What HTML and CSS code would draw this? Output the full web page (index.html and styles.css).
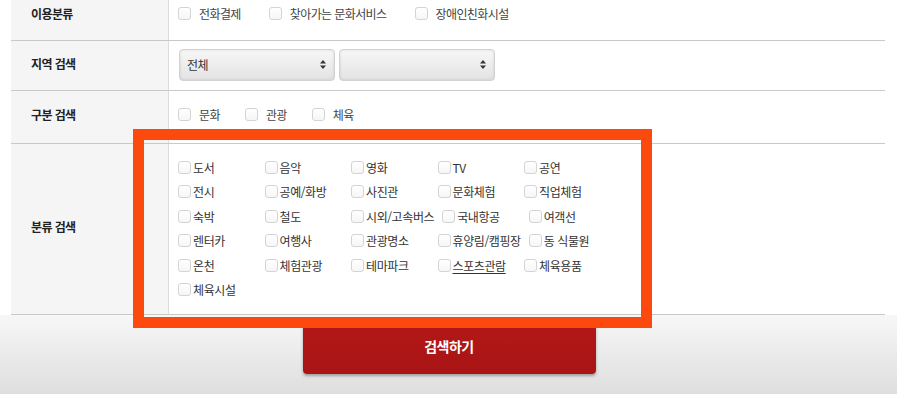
FILE: index.html
```html
<!DOCTYPE html>
<html lang="ko">
<head>
    <meta charset="UTF-8">
    <meta name="viewport" content="width=device-width, initial-scale=1.0">
    <title>상세 검색</title>
    <link rel="stylesheet" href="styles.css">
</head>
<body>
<div class="search-box">
    <table class="search-table">
        <tr class="row-use">
            <th>이용분류</th>
            <td>
                <div class="opt-list opt-wide">
                    <label class="opt"><input type="checkbox"> 전화결제</label>
                    <label class="opt"><input type="checkbox"> 찾아가는 문화서비스</label>
                    <label class="opt"><input type="checkbox"> 장애인친화시설</label>
                </div>
            </td>
        </tr>
        <tr class="row-area">
            <th>지역 검색</th>
            <td>
                <select class="sel">
                    <option>전체</option>
                </select>
                <select class="sel">
                    <option></option>
                </select>
            </td>
        </tr>
        <tr class="row-type">
            <th>구분 검색</th>
            <td>
                <div class="opt-list">
                    <label class="opt"><input type="checkbox"> 문화</label>
                    <label class="opt"><input type="checkbox"> 관광</label>
                    <label class="opt"><input type="checkbox"> 체육</label>
                </div>
            </td>
        </tr>
        <tr class="row-cate">
            <th>분류 검색</th>
            <td>
                <div class="cate-list">
                    <label class="cate"><input type="checkbox">도서</label>
                    <label class="cate"><input type="checkbox">음악</label>
                    <label class="cate"><input type="checkbox">영화</label>
                    <label class="cate"><input type="checkbox">TV</label>
                    <label class="cate"><input type="checkbox">공연</label>
                    <label class="cate"><input type="checkbox">전시</label>
                    <label class="cate"><input type="checkbox">공예/화방</label>
                    <label class="cate"><input type="checkbox">사진관</label>
                    <label class="cate"><input type="checkbox">문화체험</label>
                    <label class="cate"><input type="checkbox">직업체험</label>
                    <label class="cate"><input type="checkbox">숙박</label>
                    <label class="cate"><input type="checkbox">철도</label>
                    <label class="cate"><input type="checkbox">시외/고속버스</label>
                    <label class="cate"><input type="checkbox">국내항공</label>
                    <label class="cate"><input type="checkbox">여객선</label>
                    <label class="cate"><input type="checkbox">렌터카</label>
                    <label class="cate"><input type="checkbox">여행사</label>
                    <label class="cate"><input type="checkbox">관광명소</label>
                    <label class="cate"><input type="checkbox">휴양림/캠핑장</label>
                    <label class="cate"><input type="checkbox">동 식물원</label>
                    <label class="cate"><input type="checkbox">온천</label>
                    <label class="cate"><input type="checkbox">체험관광</label>
                    <label class="cate"><input type="checkbox">테마파크</label>
                    <label class="cate"><input type="checkbox"><u>스포츠관람</u></label>
                    <label class="cate"><input type="checkbox">체육용품</label>
                    <label class="cate"><input type="checkbox">체육시설</label>
                </div>
            </td>
        </tr>
    </table>
    <div class="highlight"></div>
</div>
<div class="search-foot">
    <button class="btn-search" type="button">검색하기</button>
</div>
</body>
</html>
```

FILE: styles.css
```css
/* 기본 */
body {
    margin: 0;
    background: #fff;
    color: #333;
    font-family: "Noto Sans CJK KR", "Noto Sans", sans-serif;
    font-size: 12px;
    letter-spacing: -0.6px;
}

/* 검색 테이블 */
.search-box {
    position: relative;
    margin: -9px 12px 0 11px;
}

.search-table {
    width: 100%;
    border-collapse: collapse;
}

.search-table th {
    width: 137px;
    padding: 0 0 5px 20px;
    background: #f5f5f5;
    color: #222;
    font-size: 12px;
    font-weight: bold;
    text-align: left;
    border-bottom: 1px solid #c9c9c9;
}

.search-table td {
    padding: 0 0 5px 9px;
    border-left: 1px solid #dcdcdc;
    border-bottom: 1px solid #c9c9c9;
}

.row-use th, .row-use td { height: 44px; }
.row-area th, .row-area td { height: 44px; }
.row-type th, .row-type td { height: 47px; }
.row-cate th { height: 165px; }

.row-cate td {
    vertical-align: top;
    padding: 11px 0 0 9px;
    height: 159px;
}

/* 체크박스 */
input[type="checkbox"] {
    appearance: none;
    -webkit-appearance: none;
    width: 13px;
    height: 13px;
    margin: 0;
    border: 1px solid #d4d4d4;
    border-radius: 3px;
    background: linear-gradient(#fff, #f6f6f6);
    flex-shrink: 0;
}

.opt-list {
    display: flex;
    gap: 25px;
}

.opt-wide {
    gap: 28px;
}

.opt {
    display: flex;
    align-items: center;
    gap: 8px;
    color: #444;
}

/* 지역 선택 */
.sel {
    appearance: none;
    -webkit-appearance: none;
    width: 156px;
    height: 32px;
    margin: 3px 0 0 1px;
    padding: 0 20px 0 7px;
    border: 1px solid #d2d2d2;
    border-radius: 4px;
    box-shadow: inset 0 0 3px rgba(0, 0, 0, 0.12);
    background:
        url("data:image/svg+xml;utf8,<svg xmlns='http://www.w3.org/2000/svg' width='6' height='9'><path d='M3 0 6 3.5H0z M0 5.5H6L3 9z' fill='%23333'/></svg>") no-repeat right 8px center,
        linear-gradient(#f7f7f7, #e3e3e3);
    color: #333;
    font-family: inherit;
    font-size: 12px;
    letter-spacing: -0.6px;
}

/* 분류 목록 */
.cate-list {
    display: flex;
    flex-wrap: wrap;
    width: 452px;
}

.cate {
    display: flex;
    align-items: center;
    gap: 2px;
    min-width: 78.5px;
    margin-right: 8px;
    height: 24.5px;
    color: #333;
    letter-spacing: -0.4px;
    white-space: nowrap;
}

.cate u {
    text-decoration-thickness: 1px;
    text-underline-offset: 2px;
}

/* 강조 표시 */
.highlight {
    position: absolute;
    left: 122px;
    top: 138px;
    width: 519px;
    height: 199px;
    box-sizing: border-box;
    border: 11px solid #fc4a0f;
}

/* 하단 버튼 */
.search-foot {
    height: 80px;
    padding-top: 7px;
    box-sizing: border-box;
    text-align: center;
    background: linear-gradient(#f7f7f7, #dedede);
}

.btn-search {
    width: 293px;
    height: 52px;
    margin-left: 1px;
    padding: 0 0 5px;
    border: none;
    border-radius: 4px;
    background: linear-gradient(#b31818, #a91414);
    box-shadow: 0 2px 3px rgba(0, 0, 0, 0.3);
    color: #fff;
    font-family: inherit;
    font-size: 14px;
    font-weight: bold;
    letter-spacing: -0.5px;
    cursor: pointer;
}
```
